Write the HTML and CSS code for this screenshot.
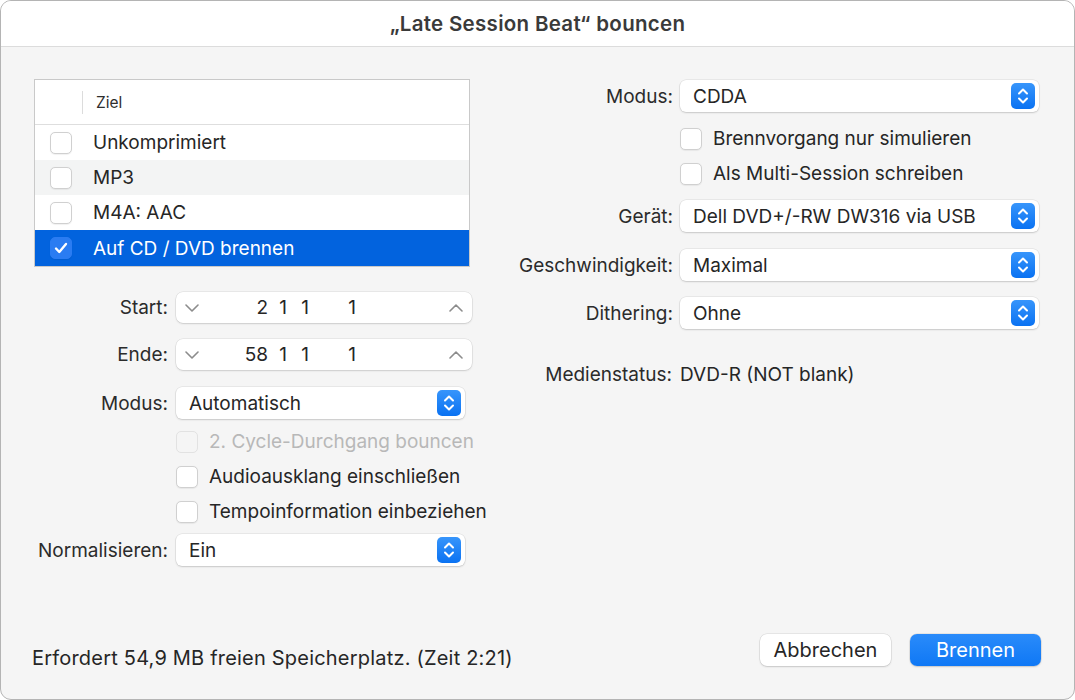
FILE: index.html
```html
<!DOCTYPE html>
<html lang="de">
<head>
    <meta charset="UTF-8">
    <title>Bouncen</title>
    <link rel="stylesheet" href="styles.css">
</head>
<body>
    <div class="window">
        <header class="titlebar">„Late Session Beat“ bouncen</header>

        <main class="content">
            <!-- Left: targets and range -->
            <section class="col-left">
                <div class="table">
                    <div class="table-head">
                        <span class="head-sep"></span>
                        <span class="head-title">Ziel</span>
                    </div>
                    <div class="table-row">
                        <span class="check"></span>
                        <span>Unkomprimiert</span>
                    </div>
                    <div class="table-row striped">
                        <span class="check"></span>
                        <span>MP3</span>
                    </div>
                    <div class="table-row">
                        <span class="check"></span>
                        <span>M4A: AAC</span>
                    </div>
                    <div class="table-row selected">
                        <span class="check checked">
                            <svg width="14" height="12" viewBox="0 0 14 12"><path d="M2 6.5l3.3 3.5L12 2" fill="none" stroke="#fff" stroke-width="2.4" stroke-linecap="round" stroke-linejoin="round"/></svg>
                        </span>
                        <span>Auf CD / DVD brennen</span>
                    </div>
                </div>

                <div class="form-row row-start">
                    <label class="form-label">Start:</label>
                    <div class="stepper">
                        <svg class="chev" width="14" height="8" viewBox="0 0 14 8"><path d="M1 1l6 6 6-6" fill="none" stroke="#8c8c8c" stroke-width="1.6" stroke-linecap="round" stroke-linejoin="round"/></svg>
                        <span class="seg seg1">2</span>
                        <span class="seg seg2">1</span>
                        <span class="seg seg3">1</span>
                        <span class="seg seg4">1</span>
                        <span class="fill"></span>
                        <svg class="chev" width="14" height="8" viewBox="0 0 14 8"><path d="M1 7l6-6 6 6" fill="none" stroke="#8c8c8c" stroke-width="1.6" stroke-linecap="round" stroke-linejoin="round"/></svg>
                    </div>
                </div>
                <div class="form-row row-end">
                    <label class="form-label">Ende:</label>
                    <div class="stepper">
                        <svg class="chev" width="14" height="8" viewBox="0 0 14 8"><path d="M1 1l6 6 6-6" fill="none" stroke="#8c8c8c" stroke-width="1.6" stroke-linecap="round" stroke-linejoin="round"/></svg>
                        <span class="seg seg1">58</span>
                        <span class="seg seg2">1</span>
                        <span class="seg seg3">1</span>
                        <span class="seg seg4">1</span>
                        <span class="fill"></span>
                        <svg class="chev" width="14" height="8" viewBox="0 0 14 8"><path d="M1 7l6-6 6 6" fill="none" stroke="#8c8c8c" stroke-width="1.6" stroke-linecap="round" stroke-linejoin="round"/></svg>
                    </div>
                </div>
                <div class="form-row row-mode">
                    <label class="form-label">Modus:</label>
                    <div class="popup popup-left">
                        <span>Automatisch</span>
                        <span class="popup-arrows"><svg width="24" height="26" viewBox="0 0 24 26"><path d="M8 10.5l4-4 4 4M8 15.5l4 4 4-4" fill="none" stroke="#fff" stroke-width="2" stroke-linecap="round" stroke-linejoin="round"/></svg></span>
                    </div>
                </div>
                <div class="check-row first disabled">
                    <span class="check"></span>
                    <span>2. Cycle-Durchgang bouncen</span>
                </div>
                <div class="check-row">
                    <span class="check"></span>
                    <span>Audioausklang einschließen</span>
                </div>
                <div class="check-row">
                    <span class="check"></span>
                    <span>Tempoinformation einbeziehen</span>
                </div>
                <div class="form-row row-norm">
                    <label class="form-label">Normalisieren:</label>
                    <div class="popup popup-left">
                        <span>Ein</span>
                        <span class="popup-arrows"><svg width="24" height="26" viewBox="0 0 24 26"><path d="M8 10.5l4-4 4 4M8 15.5l4 4 4-4" fill="none" stroke="#fff" stroke-width="2" stroke-linecap="round" stroke-linejoin="round"/></svg></span>
                    </div>
                </div>
            </section>

            <!-- Right: burn settings -->
            <section class="col-right">
                <div class="rform-row">
                    <label class="rform-label">Modus:</label>
                    <div class="popup">
                        <span>CDDA</span>
                        <span class="popup-arrows"><svg width="24" height="26" viewBox="0 0 24 26"><path d="M8 10.5l4-4 4 4M8 15.5l4 4 4-4" fill="none" stroke="#fff" stroke-width="2" stroke-linecap="round" stroke-linejoin="round"/></svg></span>
                    </div>
                </div>
                <div class="rcheck first">
                    <span class="check"></span>
                    <span>Brennvorgang nur simulieren</span>
                </div>
                <div class="rcheck">
                    <span class="check"></span>
                    <span>Als Multi-Session schreiben</span>
                </div>
                <div class="rform-row r-device">
                    <label class="rform-label">Gerät:</label>
                    <div class="popup">
                        <span>Dell DVD+/-RW DW316 via USB</span>
                        <span class="popup-arrows"><svg width="24" height="26" viewBox="0 0 24 26"><path d="M8 10.5l4-4 4 4M8 15.5l4 4 4-4" fill="none" stroke="#fff" stroke-width="2" stroke-linecap="round" stroke-linejoin="round"/></svg></span>
                    </div>
                </div>
                <div class="rform-row r-speed">
                    <label class="rform-label">Geschwindigkeit:</label>
                    <div class="popup">
                        <span>Maximal</span>
                        <span class="popup-arrows"><svg width="24" height="26" viewBox="0 0 24 26"><path d="M8 10.5l4-4 4 4M8 15.5l4 4 4-4" fill="none" stroke="#fff" stroke-width="2" stroke-linecap="round" stroke-linejoin="round"/></svg></span>
                    </div>
                </div>
                <div class="rform-row r-dither">
                    <label class="rform-label">Dithering:</label>
                    <div class="popup">
                        <span>Ohne</span>
                        <span class="popup-arrows"><svg width="24" height="26" viewBox="0 0 24 26"><path d="M8 10.5l4-4 4 4M8 15.5l4 4 4-4" fill="none" stroke="#fff" stroke-width="2" stroke-linecap="round" stroke-linejoin="round"/></svg></span>
                    </div>
                </div>
                <div class="rform-row r-status">
                    <label class="rform-label">Medienstatus:</label>
                    <span class="status-value">DVD-R (NOT blank)</span>
                </div>
            </section>
        </main>

        <footer class="footer">
            <span class="footer-info">Erfordert 54,9 MB freien Speicherplatz. (Zeit 2:21)</span>
            <div class="buttons">
                <button class="btn">Abbrechen</button>
                <button class="btn btn-primary">Brennen</button>
            </div>
        </footer>
    </div>
</body>
</html>
```

FILE: styles.css
```css
* {
    box-sizing: border-box;
}
body {
    margin: 0;
    background: #ffffff;
    font-family: Inter, "Noto Sans", sans-serif;
    font-size: 19px;
    color: #262626;
}
.window {
    width: 1075px;
    height: 700px;
    border: 1px solid #b4b4b4;
    border-radius: 11px;
    overflow: hidden;
    background: #f5f5f5;
    display: flex;
    flex-direction: column;
}
.titlebar {
    height: 46px;
    flex: none;
    background: #ffffff;
    border-bottom: 1px solid #dcdcdc;
    display: flex;
    align-items: center;
    justify-content: center;
    font-weight: 600;
    font-size: 20.5px;
    letter-spacing: 0.3px;
    color: #3a3a3a;
    padding-bottom: 1px;
}
.content {
    flex: 1;
    display: grid;
    grid-template-columns: 470px 1fr;
    padding: 32px 35px 0 30px;
}

/* table */
.table {
    margin-left: 3px;
    width: 436px;
    border: 1px solid #c9c9c9;
    background: #ffffff;
}
.table-head {
    height: 45px;
    border-bottom: 1px solid #dedede;
    display: flex;
    align-items: center;
}
.head-sep {
    width: 1px;
    height: 23px;
    background: #dcdcdc;
    margin-left: 47px;
}
.head-title {
    font-size: 15.5px;
    margin-left: 13px;
    color: #2e2e2e;
}
.table-row {
    height: 35px;
    display: flex;
    align-items: center;
    padding-left: 15px;
}
.table-row .check {
    margin-right: 21px;
}
.table-row.striped {
    background: #f3f4f4;
}
.table-row.selected {
    background: #0263de;
    color: #ffffff;
    height: 36px;
}

/* checkbox */
.check {
    width: 22px;
    height: 22px;
    flex: none;
    border-radius: 5px;
    background: #ffffff;
    border: 1px solid #d0d0d0;
    box-shadow: 0 0.5px 1px rgba(0, 0, 0, 0.06);
    display: flex;
    align-items: center;
    justify-content: center;
}
.check.checked {
    background: #2a7cf2;
    border-color: #2a7cf2;
}

/* left form */
.form-row {
    display: flex;
    align-items: center;
}
.form-label {
    width: 145px;
    text-align: right;
    padding-right: 8px;
    flex: none;
    color: #2b2b2b;
}
.row-start {
    margin-top: 25px;
}
.row-end {
    margin-top: 16px;
}
.row-mode {
    margin-top: 17px;
}
.row-norm {
    margin-top: 5px;
}
.stepper {
    width: 296px;
    height: 31px;
    background: #ffffff;
    border-radius: 7px;
    box-shadow: 0 0 0 0.5px rgba(0, 0, 0, 0.1), 0 1px 2px rgba(0, 0, 0, 0.12);
    display: flex;
    align-items: center;
    padding: 0 9px 0 9px;
}
.seg {
    text-align: right;
    flex: none;
}
.seg1 { width: 69px; }
.seg2 { width: 19px; }
.seg3 { width: 22px; }
.seg4 { width: 47px; }
.fill {
    flex: 1;
}
.popup {
    height: 32px;
    background: #ffffff;
    border-radius: 6px;
    box-shadow: 0 0 0 0.5px rgba(0, 0, 0, 0.1), 0 1px 2px rgba(0, 0, 0, 0.14);
    display: flex;
    align-items: center;
    justify-content: space-between;
    padding: 0 4px 0 13px;
}
.popup-left {
    width: 289px;
}
.popup-arrows {
    width: 24px;
    height: 26px;
    border-radius: 5px;
    background: linear-gradient(#3795fb, #0a72f2);
    display: flex;
}
.check-row {
    height: 35px;
    display: flex;
    align-items: center;
    margin-left: 145px;
}
.check-row.first {
    margin-top: 5px;
}
.check-row .check {
    margin-right: 11px;
}
.check-row.disabled {
    color: #b8b8b8;
}
.check-row.disabled .check {
    background: #f5f5f5;
    border-color: #e2e2e2;
    box-shadow: none;
}

/* right form */
.col-right {
    padding-top: 1px;
}
.rform-row {
    display: grid;
    grid-template-columns: 1fr 359px;
    gap: 7px;
    align-items: center;
}
.rform-label {
    text-align: right;
    color: #2b2b2b;
}
.rcheck {
    height: 35px;
    display: flex;
    align-items: center;
    margin-left: 179px;
}
.rcheck.first {
    margin-top: 9px;
}
.rcheck .check {
    margin-right: 11px;
}
.r-device {
    margin-top: 9px;
}
.r-speed {
    margin-top: 17px;
}
.r-dither {
    margin-top: 16px;
}
.r-status {
    margin-top: 35px;
    line-height: 22px;
    gap: 8px;
}

/* footer */
.footer {
    flex: none;
    display: flex;
    align-items: flex-end;
    justify-content: space-between;
    padding: 0 33px 30px 31px;
    font-size: 20px;
}
.footer-info {
    line-height: 22px;
    letter-spacing: 0.2px;
}
.buttons {
    display: flex;
    gap: 19px;
    margin-bottom: 3px;
}
.btn {
    width: 131px;
    height: 32px;
    border: none;
    border-radius: 7px;
    background: #ffffff;
    font-family: Inter, "Noto Sans", sans-serif;
    font-size: 20px;
    color: #262626;
    box-shadow: 0 0 0 0.5px rgba(0, 0, 0, 0.12), 0 1px 2px rgba(0, 0, 0, 0.14);
    padding-bottom: 1px;
}
.btn-primary {
    background: linear-gradient(#2a8bfa, #0f78f5);
    color: #ffffff;
}
```
